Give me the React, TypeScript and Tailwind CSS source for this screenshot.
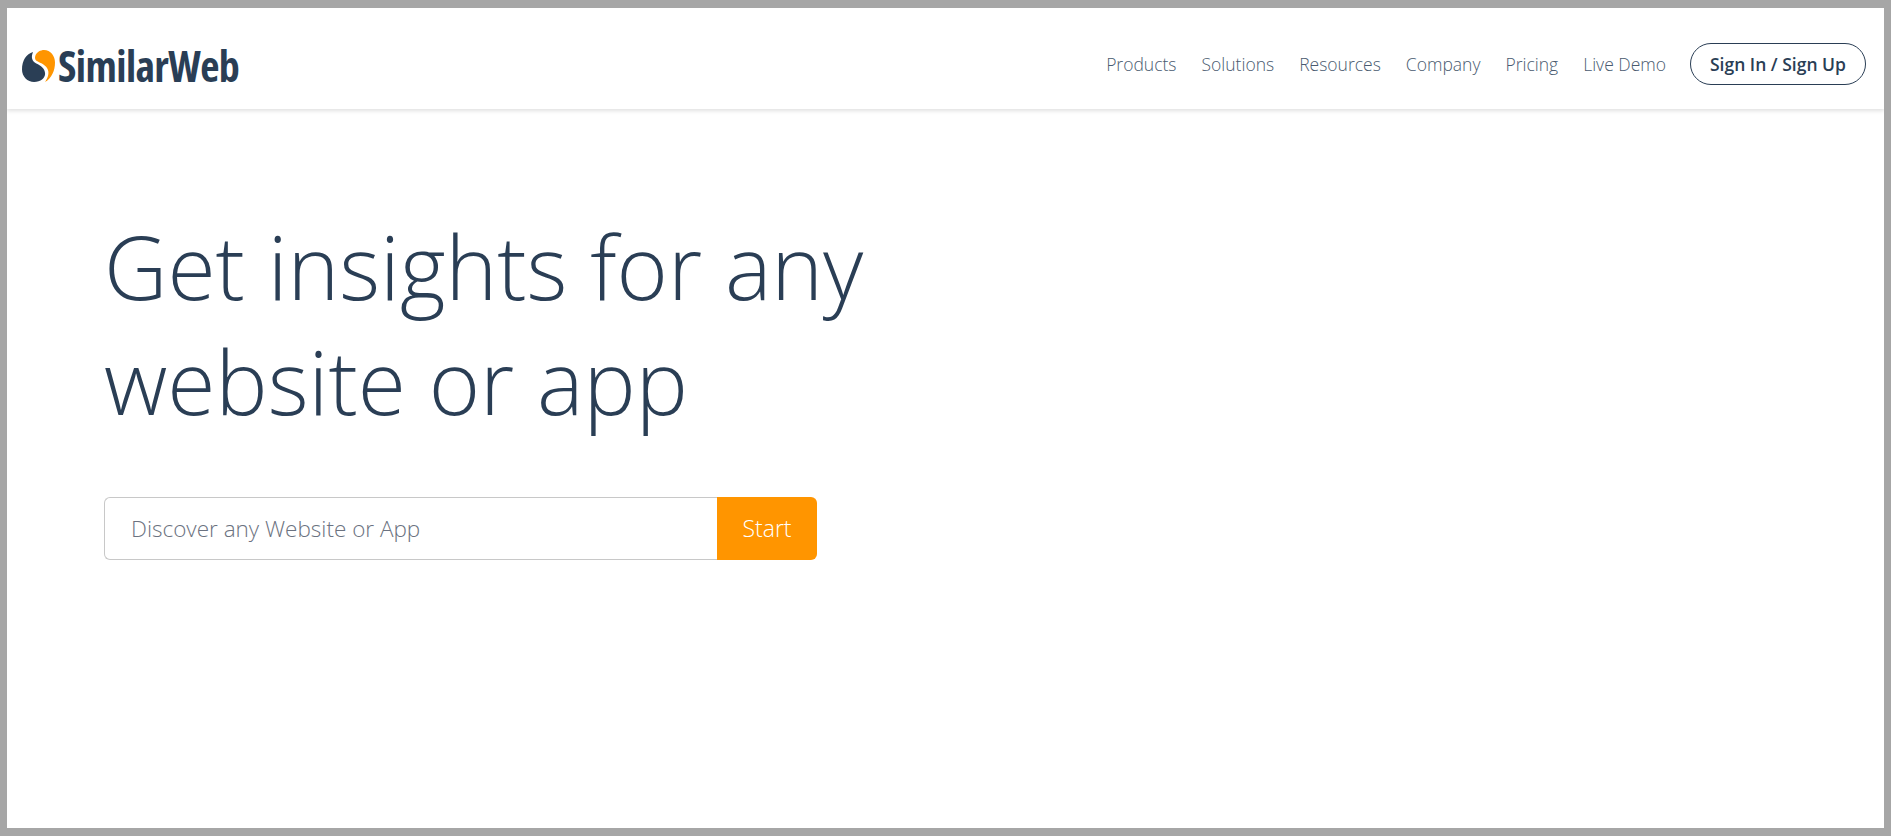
const navItems = ["Products", "Solutions", "Resources", "Company", "Pricing", "Live Demo"];

const Logo = () => (
  <svg width="33" height="32" viewBox="0 0 30 31" preserveAspectRatio="none" className="shrink-0">
    <path
      d="M10 2C4 4 0 10 0 19C0 26 5 31 11 31C17 31 21 27 21 23C21 18 17 15 13 13C9 11 8 7 10 2Z"
      fill="#2a3e55"
    />
    <path
      d="M12 6C13 2 17 0 20 0C26 0 30 6 30 12C30 20 27 27 21 31C24 26 25 22 23 18C21 14 17 13 14 11C12 10 11.500 8 12 6Z"
      fill="#ff9500"
    />
  </svg>
);

export default function App() {
  return (
    <div className="w-[1891px] h-[836px] overflow-hidden border-solid border-t-[8px] border-b-[8px] border-x-[7px] border-[#a6a6a6] bg-white font-['Open_Sans',sans-serif] text-[#2a3e55]">
      <header className="h-[101px] flex items-center justify-between pl-[15px] pr-[18px] pt-[11px] shadow-[0_2px_4px_rgba(0,0,0,0.12)]">
        <div className="flex items-center gap-[3px] pt-[3px]">
          <Logo />
          <span className="font-bold text-[42px] leading-none tracking-[-0.6px] [font-stretch:75%]">SimilarWeb</span>
        </div>
        <nav className="flex items-center">
          <div className="flex items-center gap-[25px] text-[17.5px] font-light text-[#4a5b70]">
            {navItems.map((item) => (
              <a key={item}>{item}</a>
            ))}
          </div>
          <button className="ml-[24px] h-[42px] w-[176px] rounded-[21px] border border-[#2a3e55] text-[17.5px] font-semibold text-[#2a3e55]">
            Sign In / Sign Up
          </button>
        </nav>
      </header>

      <main className="pl-[97px] pt-[100px]">
        <h1 className="text-[87.7px] leading-[115px] font-light">
          Get insights for any
          <br />
          website or app
        </h1>
        <div className="mt-[58px] flex h-[63px] w-[713px]">
          <div className="flex-1 flex items-center pl-[26px] rounded-l-[6px] border border-r-0 border-[#c8c8c8] text-[22.5px] font-light text-[#6b7280]">
            Discover any Website or App
          </div>
          <button className="w-[100px] rounded-r-[6px] bg-[#ff9500] text-[23px] font-light text-white">Start</button>
        </div>
      </main>
    </div>
  );
}
